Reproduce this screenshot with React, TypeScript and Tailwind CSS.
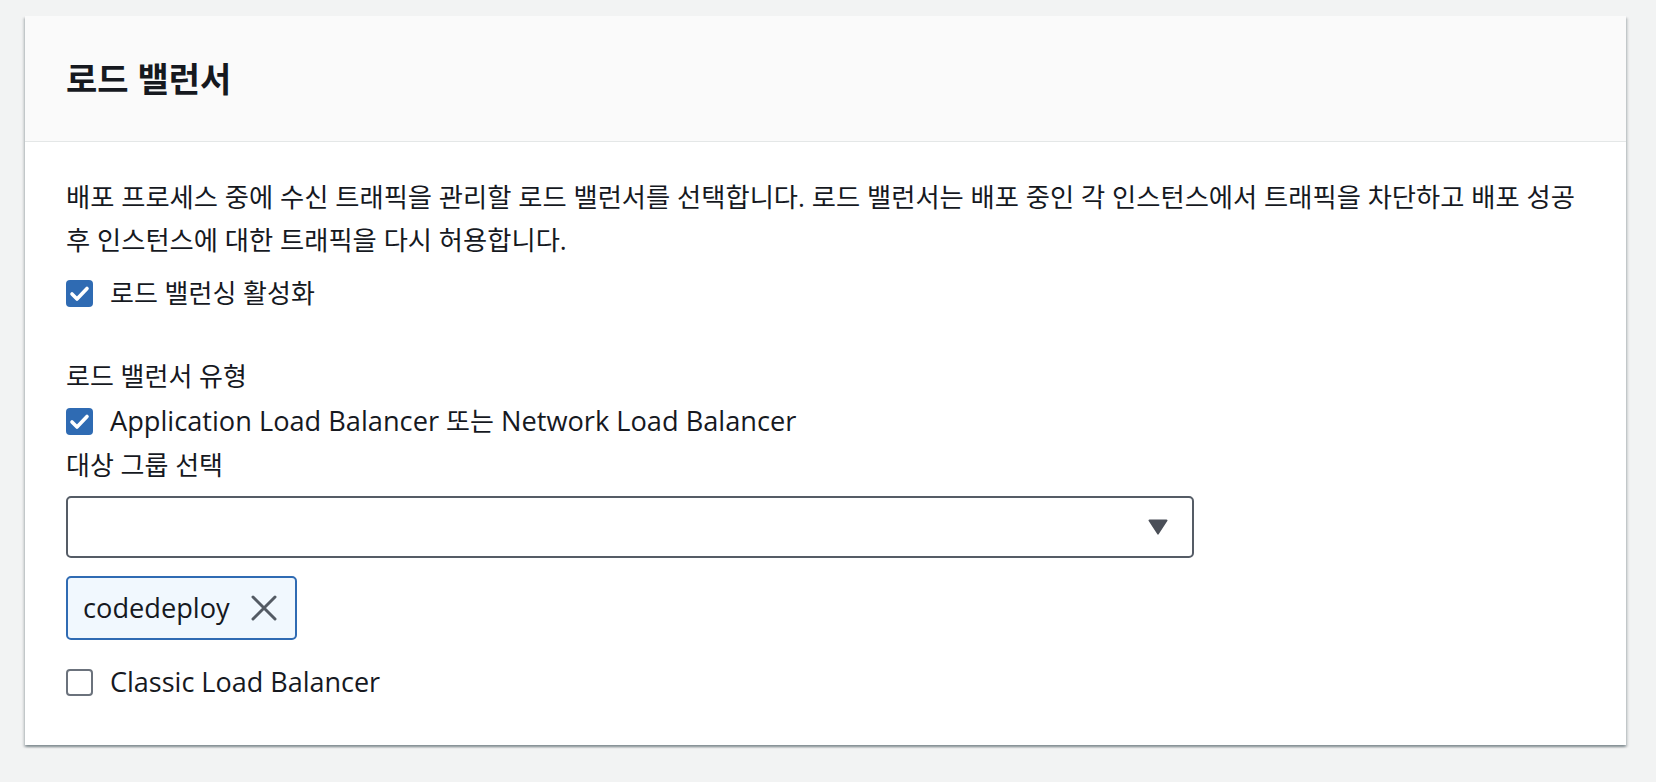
import React, { useState } from 'react';

const font = { fontFamily: '"Open Sans", "Noto Sans CJK KR", sans-serif' };

interface CheckProps {
  checked: boolean;
  onToggle: () => void;
  children: React.ReactNode;
}

const Check: React.FC<CheckProps> = ({ checked, onToggle, children }) => (
  <label className="flex h-[43px] cursor-pointer items-center" onClick={onToggle}>
    {checked ? (
      <span className="flex h-[27px] w-[27px] shrink-0 items-center justify-center rounded-[4px] bg-[#2f6bb3]">
        <svg width="21" height="21" viewBox="0 0 21 21" fill="none">
          <path d="M3 11l5 5L18 5.5" stroke="#fff" strokeWidth="3.6" strokeLinecap="round" strokeLinejoin="round" />
        </svg>
      </span>
    ) : (
      <span className="h-[27px] w-[27px] shrink-0 rounded-[4px] border-2 border-[#6b727c] bg-white" />
    )}
    <span className="ml-[17px]">{children}</span>
  </label>
);

export default function App() {
  const [enabled, setEnabled] = useState(true);
  const [alb, setAlb] = useState(true);
  const [classic, setClassic] = useState(false);
  const [groups, setGroups] = useState<string[]>(['codedeploy']);

  return (
    <div className="min-h-screen bg-[#f2f3f3] pl-[25px] pr-[30px] pt-[16px] text-[#16191f]" style={font}>
      <div className="w-[1601px] bg-white shadow-[0_2px_2px_0_rgba(0,28,36,0.3),2px_2px_2px_0_rgba(0,28,36,0.12),-2px_2px_2px_0_rgba(0,28,36,0.12)]">
        {/* Header */}
        <div className="flex h-[126px] items-center border-b border-[#e4e7e7] bg-[#fafafa] px-[41px]">
          <h2 className="text-[34px] font-bold leading-none" style={font}>로드 밸런서</h2>
        </div>

        {/* Body */}
        <div className="px-[41px] pb-[41px] pt-[34px]">
          <p className="text-[26.3px] leading-[43px]">
            배포 프로세스 중에 수신 트래픽을 관리할 로드 밸런서를 선택합니다. 로드 밸런서는 배포 중인 각 인스턴스에서 트래픽을 차단하고 배포 성공 후 인스턴스에 대한 트래픽을 다시 허용합니다.
          </p>

          <div className="mt-[10px] text-[26px]">
            <Check checked={enabled} onToggle={() => setEnabled(!enabled)}>로드 밸런싱 활성화</Check>
          </div>

          <div className="mt-[40px] text-[26px] leading-[43px]">로드 밸런서 유형</div>

          <div className="mt-[2px] text-[27.2px]">
            <Check checked={alb} onToggle={() => setAlb(!alb)}>
              Application Load Balancer <span className="text-[26px]">또는</span> Network Load Balancer
            </Check>
          </div>

          <div className="mt-[1px] text-[26px] leading-[43px]">대상 그룹 선택</div>

          <button className="mt-[9px] flex h-[62px] w-[1128px] items-center justify-end rounded-[5px] border-2 border-[#555c66] bg-white pr-[23px]">
            <svg width="22" height="18" viewBox="0 0 22 18">
              <path d="M2.5 1.5h17a1 1 0 0 1 .8 1.6l-8.5 13a1 1 0 0 1-1.6 0L1.7 3.1a1 1 0 0 1 .8-1.6z" fill="#4b4f58" />
            </svg>
          </button>

          {groups.length > 0 && (
            <div className="mt-[18px] flex">
              {groups.map((g) => (
                <div
                  key={g}
                  className="flex h-[64px] items-center rounded-[5px] border-2 border-[#2f6bb3] bg-[#f1f8fe] pl-[15px] pr-[18px] text-[27.2px]"
                >
                  <span>{g}</span>
                  <button className="ml-[21px] flex items-center" onClick={() => setGroups(groups.filter((x) => x !== g))}>
                    <svg width="26" height="26" viewBox="0 0 26 26">
                      <path d="M2 2l22 22M24 2L2 24" stroke="#545b64" strokeWidth="3" strokeLinecap="round" />
                    </svg>
                  </button>
                </div>
              ))}
            </div>
          )}

          <div className="mt-[21px] text-[27px]">
            <Check checked={classic} onToggle={() => setClassic(!classic)}>Classic Load Balancer</Check>
          </div>
        </div>
      </div>
    </div>
  );
}
